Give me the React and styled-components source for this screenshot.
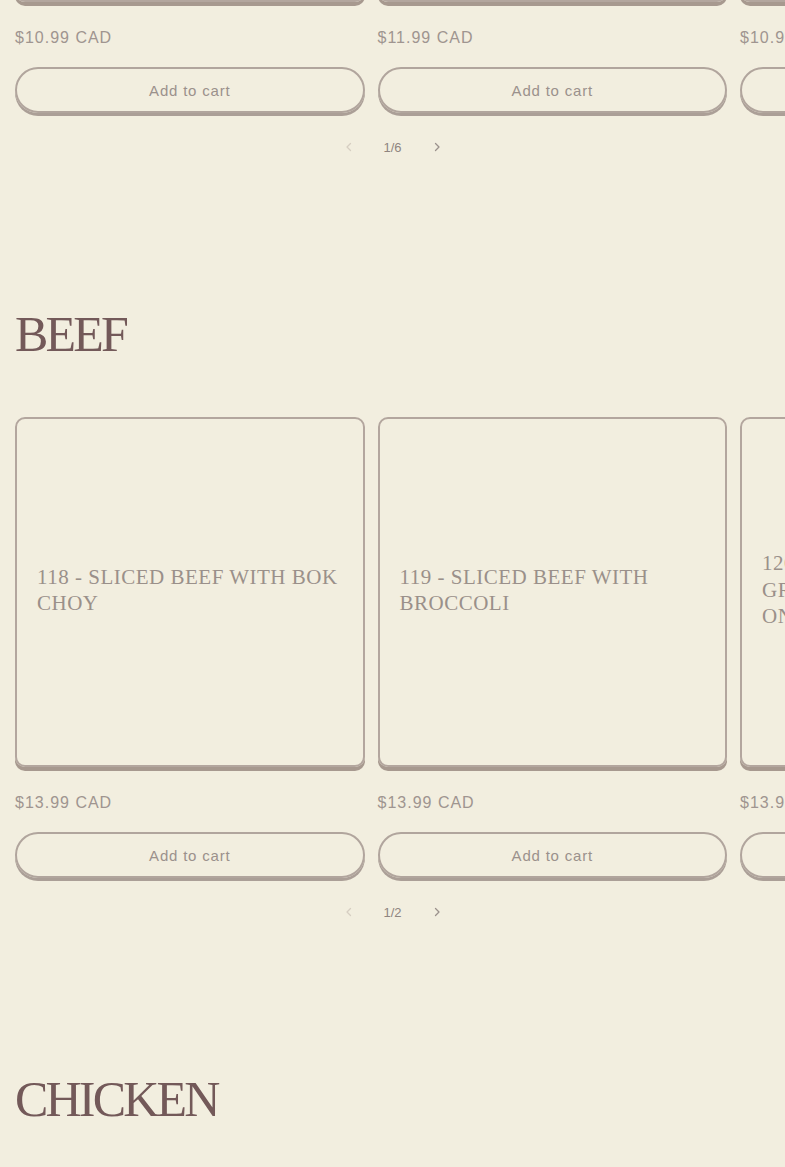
import React from 'react';
import styled, { createGlobalStyle } from 'styled-components';

const GlobalStyle = createGlobalStyle`
  html, body {
    margin: 0;
    padding: 0;
    background: #f2eedf;
    overflow-x: hidden;
  }
  * { box-sizing: border-box; }
`;

const Page = styled.main`
  width: 785px;
  overflow: hidden;
  background: #f2eedf;
  padding-bottom: 60px;
`;

const Section = styled.section`
  padding: 0 15px;
  margin-top: ${(p) => (p.$first ? '0' : '147px')};
`;

const Heading = styled.h2`
  margin: 0 0 58px;
  font-family: "Liberation Serif", "Times New Roman", serif;
  font-weight: 400;
  font-size: 50px;
  line-height: 1;
  letter-spacing: -2.8px;
  color: #735959;
`;

const Slider = styled.div`
  display: flex;
  gap: 13px;
  margin-top: ${(p) => (p.$scrolled ? '-348px' : '0')};
`;

const Product = styled.div`
  flex: 0 0 349.5px;
  display: flex;
  flex-direction: column;
`;

const Card = styled.div`
  height: 350px;
  border: 2px solid #b3a69e;
  border-radius: 10px;
  box-shadow: 0 4px 0 #a7998f;
  display: flex;
  align-items: center;
  padding: 0 20px;
`;

const Title = styled.h3`
  margin: 0 0 4px;
  max-width: 303px;
  font-family: "Liberation Serif", "Times New Roman", serif;
  font-weight: 400;
  font-size: 21px;
  line-height: 26.5px;
  letter-spacing: 0.5px;
  color: #9a908a;
`;

const Price = styled.div`
  margin-top: 26px;
  font-family: "Liberation Sans", Arial, sans-serif;
  font-size: 16px;
  line-height: 20px;
  letter-spacing: 1px;
  color: #9f9590;
`;

const CartButton = styled.button`
  margin-top: 19px;
  height: 46px;
  width: 100%;
  border: 2px solid #b1a59d;
  border-radius: 40px;
  box-shadow: 0 3px 0 #ab9f97;
  background: transparent;
  font-family: "Liberation Sans", Arial, sans-serif;
  font-size: 15px;
  letter-spacing: 0.8px;
  color: #9b918c;
  cursor: pointer;
`;

const Pager = styled.div`
  margin-top: 19px;
  height: 30px;
  display: flex;
  justify-content: center;
  align-items: center;
`;

const PagerArrow = styled.span`
  width: 44px;
  display: flex;
  justify-content: center;
  color: ${(p) => (p.$disabled ? '#d6cec2' : '#9b918c')};
`;

const PagerCount = styled.span`
  width: 44px;
  text-align: center;
  font-family: "Liberation Sans", Arial, sans-serif;
  font-size: 13px;
  color: #8f8580;
`;

const Chevron = ({ dir }) => (
  <svg width="10" height="10" viewBox="0 0 10 10" fill="none">
    <path
      d={dir === 'left' ? 'M6.5 1.5 3 5l3.5 3.5' : 'M3.5 1.5 7 5 3.5 8.5'}
      stroke="currentColor"
      strokeWidth="1.3"
      strokeLinecap="round"
      strokeLinejoin="round"
    />
  </svg>
);

const sections = [
  {
    id: 'prev',
    page: '1/6',
    items: [
      { name: '', price: '$10.99 CAD' },
      { name: '', price: '$11.99 CAD' },
      { name: '', price: '$10.99 CAD' },
    ],
  },
  {
    id: 'beef',
    title: 'BEEF',
    page: '1/2',
    items: [
      { name: '118 - SLICED BEEF WITH BOK CHOY', price: '$13.99 CAD' },
      { name: '119 - SLICED BEEF WITH BROCCOLI', price: '$13.99 CAD' },
      { name: '120 - SLICED BEEF WITH GREEN PEPPERS AND ONIONS', price: '$13.99 CAD' },
    ],
  },
  {
    id: 'chicken',
    title: 'CHICKEN',
    items: [],
  },
];

const App = () => {
  return (
    <>
      <GlobalStyle />
      <Page>
        {sections.map((s, i) => (
          <Section key={s.id} $first={i === 0}>
            {s.title && <Heading>{s.title}</Heading>}
            {s.items.length > 0 && (
              <>
                <Slider $scrolled={i === 0}>
                  {s.items.map((item, j) => (
                    <Product key={j}>
                      <Card>{item.name && <Title>{item.name}</Title>}</Card>
                      <Price>{item.price}</Price>
                      <CartButton>Add to cart</CartButton>
                    </Product>
                  ))}
                </Slider>
                <Pager>
                  <PagerArrow $disabled>
                    <Chevron dir="left" />
                  </PagerArrow>
                  <PagerCount>{s.page}</PagerCount>
                  <PagerArrow>
                    <Chevron dir="right" />
                  </PagerArrow>
                </Pager>
              </>
            )}
          </Section>
        ))}
      </Page>
    </>
  );
};

export default App;
